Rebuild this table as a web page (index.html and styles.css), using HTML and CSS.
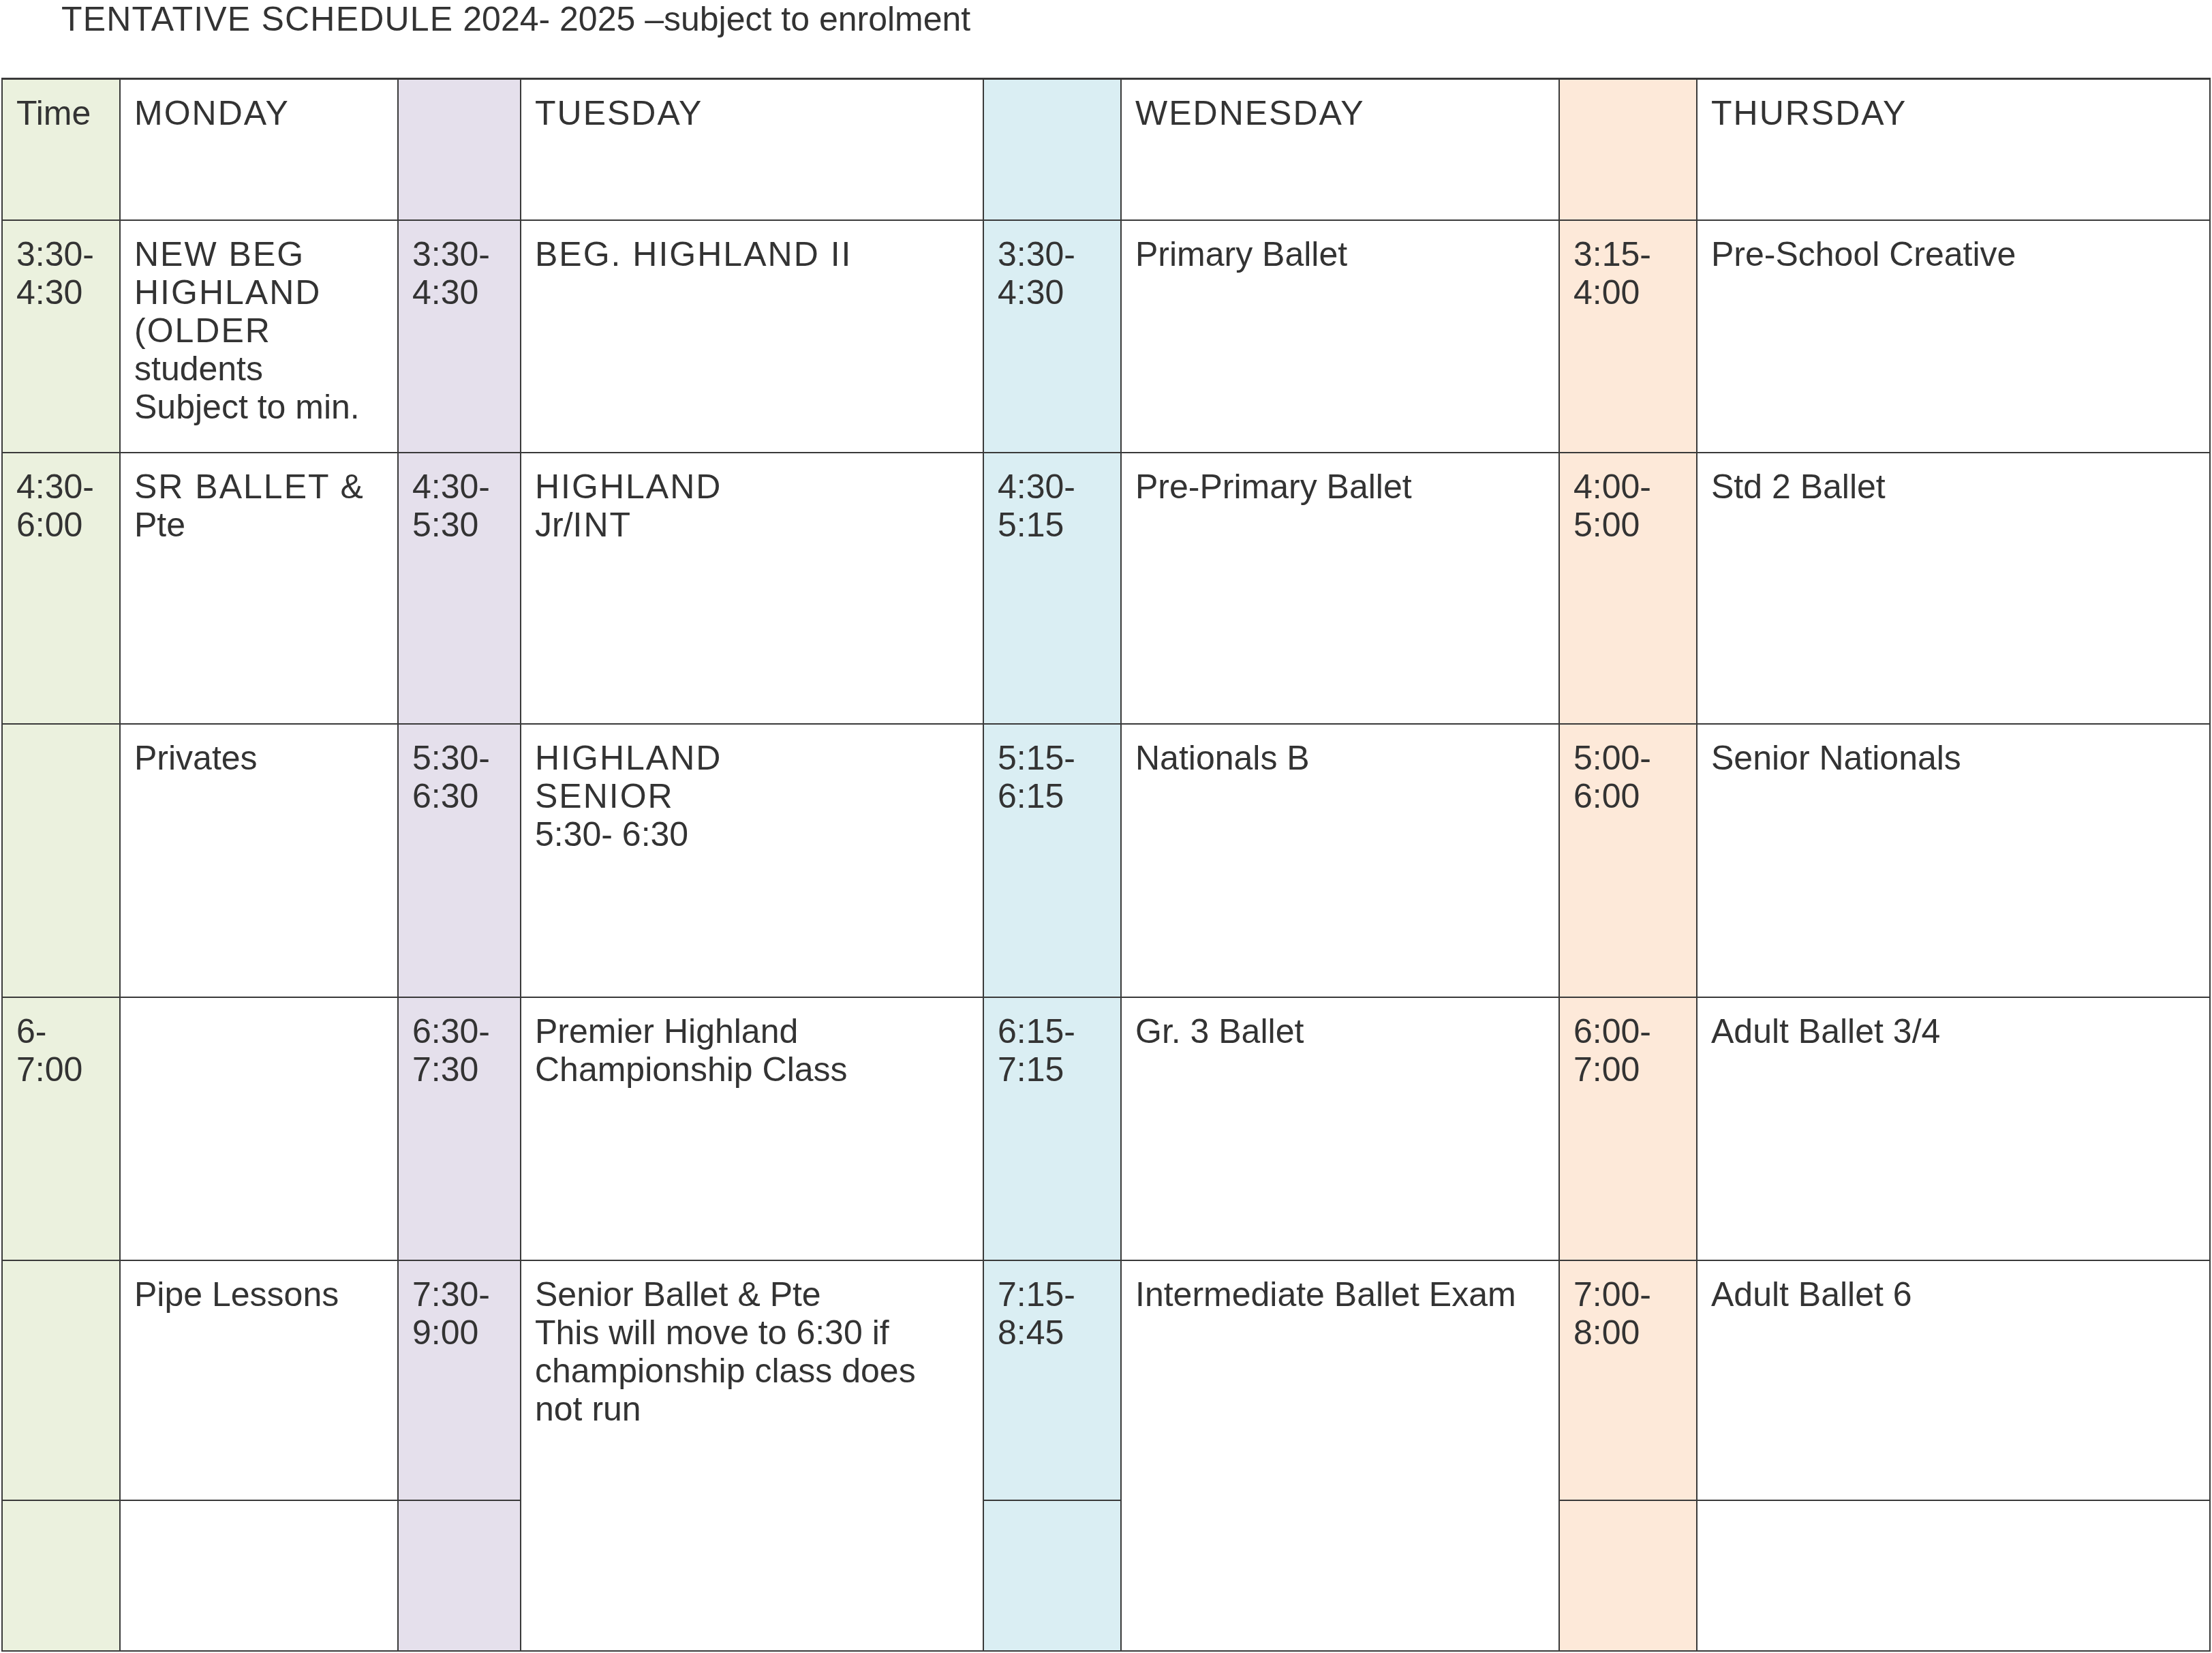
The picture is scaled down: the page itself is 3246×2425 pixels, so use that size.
FILE: index.html
```html
<!DOCTYPE html>
<html lang="en">
<head>
<meta charset="utf-8">
<title>Tentative Schedule 2024-2025</title>
<link rel="stylesheet" href="styles.css">
</head>
<body>
<div class="title"><span class="caps-t">TENTATIVE SCHEDULE</span> 2024- 2025 –subject to enrolment</div>
<table class="schedule">
  <colgroup>
    <col class="c-time green">
    <col class="c-mon">
    <col class="c-tt purple">
    <col class="c-tue">
    <col class="c-wt blue">
    <col class="c-wed">
    <col class="c-ht orange">
    <col class="c-thu">
  </colgroup>
  <tr class="r-head">
    <td>Time</td>
    <td><span class="caps">MONDAY</span></td>
    <td></td>
    <td><span class="caps">TUESDAY</span></td>
    <td></td>
    <td><span class="caps">WEDNESDAY</span></td>
    <td></td>
    <td><span class="caps">THURSDAY</span></td>
  </tr>
  <tr class="r1">
    <td>3:30-<br>4:30</td>
    <td><span class="caps">NEW BEG<br>HIGHLAND<br>(OLDER</span><br>students<br>Subject to min.</td>
    <td>3:30-<br>4:30</td>
    <td><span class="caps">BEG. HIGHLAND II</span></td>
    <td>3:30-<br>4:30</td>
    <td>Primary Ballet</td>
    <td>3:15-<br>4:00</td>
    <td>Pre-School Creative</td>
  </tr>
  <tr class="r2">
    <td>4:30-<br>6:00</td>
    <td><span class="caps">SR BALLET &amp;</span><br>Pte</td>
    <td>4:30-<br>5:30</td>
    <td><span class="caps">HIGHLAND</span><br>Jr/<span class="caps">INT</span></td>
    <td>4:30-<br>5:15</td>
    <td>Pre-Primary Ballet</td>
    <td>4:00-<br>5:00</td>
    <td>Std 2 Ballet</td>
  </tr>
  <tr class="r3">
    <td></td>
    <td>Privates</td>
    <td>5:30-<br>6:30</td>
    <td><span class="caps">HIGHLAND<br>SENIOR</span><br>5:30- 6:30</td>
    <td>5:15-<br>6:15</td>
    <td>Nationals B</td>
    <td>5:00-<br>6:00</td>
    <td>Senior Nationals</td>
  </tr>
  <tr class="r4">
    <td>6-<br>7:00</td>
    <td></td>
    <td>6:30-<br>7:30</td>
    <td>Premier Highland<br>Championship Class</td>
    <td>6:15-<br>7:15</td>
    <td>Gr. 3 Ballet</td>
    <td>6:00-<br>7:00</td>
    <td>Adult Ballet 3/4</td>
  </tr>
  <tr class="r5">
    <td></td>
    <td>Pipe Lessons</td>
    <td>7:30-<br>9:00</td>
    <td rowspan="2">Senior Ballet &amp; Pte<br>This will move to 6:30 if<br>championship class does<br>not run</td>
    <td>7:15-<br>8:45</td>
    <td rowspan="2">Intermediate Ballet Exam</td>
    <td>7:00-<br>8:00</td>
    <td>Adult Ballet 6</td>
  </tr>
  <tr class="r6">
    <td></td>
    <td></td>
    <td></td>
    <td></td>
    <td></td>
    <td></td>
  </tr>
</table>
</body>
</html>
```
FILE: styles.css
```css
html, body {
  margin: 0;
  padding: 0;
  background: #ffffff;
}
body {
  font-family: "Liberation Sans", Arial, sans-serif;
  color: #333333;
  font-size: 50px;
  line-height: 56px;
}
.title {
  padding-left: 90px;
  height: 56px;
}
.caps-t {
  letter-spacing: 1.2px;
}
.caps {
  letter-spacing: 2px;
}
.schedule {
  margin-top: 58px;
  margin-left: 2px;
  border-collapse: collapse;
  table-layout: fixed;
  width: 3242px;
}
.schedule td {
  border: 2px solid #3a3a3a;
  padding: 21px 10px 0 20px;
  vertical-align: top;
  white-space: nowrap;
}
.schedule tr:first-child td {
  border-top-width: 3px;
}
.c-time { width: 173px; }
.c-mon { width: 408px; }
.c-tt { width: 180px; }
.c-tue { width: 679px; }
.c-wt { width: 202px; }
.c-wed { width: 643px; }
.c-ht { width: 202px; }
.c-thu { width: 753px; }
.green { background: #ebf1de; }
.purple { background: #e5e0ec; }
.blue { background: #daeef3; }
.orange { background: #fde9d9; }
.r-head { height: 207px; }
.r1 { height: 341px; }
.r2 { height: 398px; }
.r3 { height: 401px; }
.r4 { height: 386px; }
.r5 { height: 352px; }
.r6 { height: 221px; }
```
